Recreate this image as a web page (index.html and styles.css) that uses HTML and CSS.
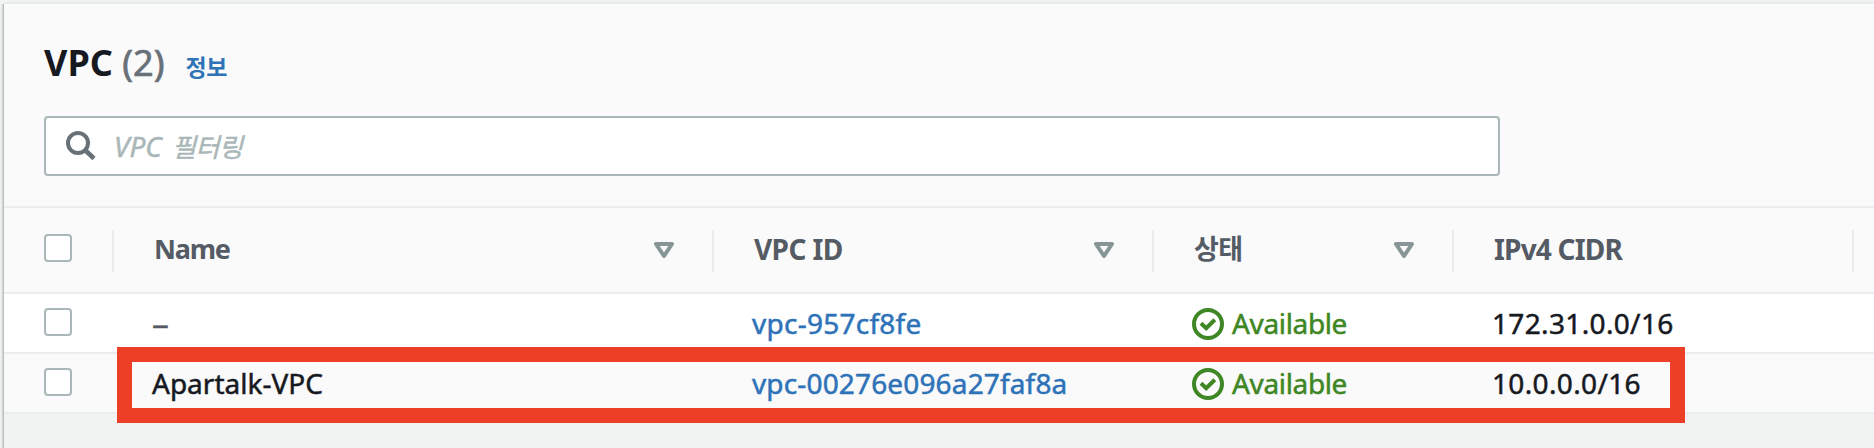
FILE: index.html
```
<!DOCTYPE html>
<html lang="ko">
<head>
<meta charset="utf-8">
<title>VPC</title>
<link rel="stylesheet" href="styles.css">
</head>
<body>
<svg width="0" height="0" class="defs">
  <symbol id="sort" viewBox="0 0 20 16"><path d="M2 2h16l-8 12z" fill="none" stroke="currentColor" stroke-width="4" stroke-linejoin="round"/></symbol>
  <symbol id="ok" viewBox="0 0 32 32"><circle cx="16" cy="16" r="14" fill="none" stroke="currentColor" stroke-width="4"/><path d="M9 15.2l5.2 5L22.800 11.800" fill="none" stroke="currentColor" stroke-width="4"/></symbol>
</svg>
<main class="panel">
  <header class="toolbar">
    <div class="heading">
      <h1 class="title">VPC <span class="count">(2)</span></h1>
      <a class="info">정보</a>
    </div>
    <div class="search">
      <svg class="search-icon" viewBox="0 0 30 30"><circle cx="12" cy="12" r="10" fill="none" stroke="currentColor" stroke-width="4"/><path d="M19 19l9 8.500" stroke="currentColor" stroke-width="4.500"/></svg>
      <span class="placeholder">VPC <span class="hangul">필터링</span></span>
    </div>
  </header>
  <section class="table">
    <div class="row head">
      <div class="cell select"><span class="box"></span></div>
      <div class="cell"><span class="label name">Name</span><svg class="sort"><use href="#sort"/></svg></div>
      <div class="cell"><span class="label vpcid">VPC ID</span><svg class="sort"><use href="#sort"/></svg></div>
      <div class="cell"><span class="label state">상태</span><svg class="sort"><use href="#sort"/></svg></div>
      <div class="cell"><span class="label cidr">IPv4 CIDR</span></div>
      <div class="cell"></div>
    </div>
    <div class="row">
      <div class="cell select"><span class="box"></span></div>
      <div class="cell empty"><span class="dash">–</span></div>
      <div class="cell"><a class="link short">vpc-957cf8fe</a></div>
      <div class="cell status"><svg class="ok"><use href="#ok"/></svg><span>Available</span></div>
      <div class="cell number">172.31.0.0/16</div>
      <div class="cell"></div>
    </div>
    <div class="row alt">
      <div class="cell select"><span class="box"></span></div>
      <div class="cell">Apartalk-VPC</div>
      <div class="cell"><a class="link">vpc-00276e096a27faf8a</a></div>
      <div class="cell status"><svg class="ok"><use href="#ok"/></svg><span>Available</span></div>
      <div class="cell number">10.0.0.0/16</div>
      <div class="cell"></div>
    </div>
  </section>
</main>
<div class="highlight"></div>
</body>
</html>
```
FILE: styles.css
```
* { box-sizing: border-box; }
body {
  margin: 0;
  height: 448px;
  overflow: hidden;
  position: relative;
  padding: 4px 0 0 4px;
  background: #f1f3f3;
  color: #16191f;
  font: 28px/40px "Noto Sans", "Noto Sans CJK KR", sans-serif;
}
.defs { position: absolute; }
.panel {
  height: 444px;
  box-shadow: 0 -2px 0 #e9ecec, -1px 0 0 #b9bdbd, -2px 0 0 #d5d9d9, -3px 0 0 #e4e8e8;
}
.toolbar {
  height: 204px;
  padding: 34px 40px 0;
  background: #fafafa;
  border-bottom: 2px solid #eaeded;
}
.heading { display: flex; align-items: baseline; height: 50px; }
.title { margin: 0; font-size: 36px; line-height: 50px; font-weight: 700; }
.count { font-weight: 400; color: #687078; -webkit-text-stroke: .7px; }
.info { margin-left: 21px; font-size: 23px; font-weight: 700; color: #2e73b8; letter-spacing: -.4px; }
.search {
  display: flex;
  align-items: center;
  width: 1456px;
  height: 60px;
  margin-top: 28px;
  padding-left: 20px;
  background: #fff;
  border: 2px solid #aab7b8;
  border-radius: 4px;
}
.search-icon { width: 30px; height: 30px; color: #687078; }
.placeholder { margin-left: 18px; font-style: italic; color: #aab7b8; -webkit-text-stroke: .5px; }
.hangul { margin-left: 3px; font-size: 26px; letter-spacing: -.4px; }
.row {
  display: grid;
  grid-template-columns: 108px 600px 440px 300px 400px 1fr;
  height: 60px;
  background: #fff;
  border-bottom: 2px solid #eaeded;
}
.alt { background: #fafafa; }
.cell { display: flex; padding: 9px 0 0 40px; -webkit-text-stroke: .5px; }
.select { padding-top: 14px; }
.box {
  width: 28px;
  height: 28px;
  background: #fff;
  border: 2px solid #aab7b8;
  border-radius: 4px;
}
.head { height: 86px; background: #fafafa; font-weight: 700; color: #545b64; }
.head .cell {
  justify-content: space-between;
  padding: 21px 38px 0 42px;
  background: linear-gradient(#eaeded, #eaeded) 0 22px / 2px 42px no-repeat;
  -webkit-text-stroke: 0;
}
.head .select { padding: 26px 0 0 40px; background: none; }
.name { font-size: 27px; letter-spacing: -1.2px; }
.vpcid { letter-spacing: -.6px; }
.state { font-size: 27px; letter-spacing: -.5px; }
.cidr { letter-spacing: -.8px; }
.sort { width: 20px; height: 16px; margin-top: 13px; color: #879596; }
.empty { color: #545b64; }
.dash { display: inline-block; transform: scaleX(1.2); transform-origin: 0 50%; }
.link { color: #2e73b8; letter-spacing: .15px; }
.short { letter-spacing: .25px; }
.status { color: #3f8624; letter-spacing: -.35px; }
.ok { width: 32px; height: 32px; margin: 5px 8px 0 0; }
.number { letter-spacing: .35px; }
.highlight {
  position: absolute;
  left: 117px;
  top: 347px;
  width: 1568px;
  height: 76px;
  border: 15px solid #ec3f26;
}
```
